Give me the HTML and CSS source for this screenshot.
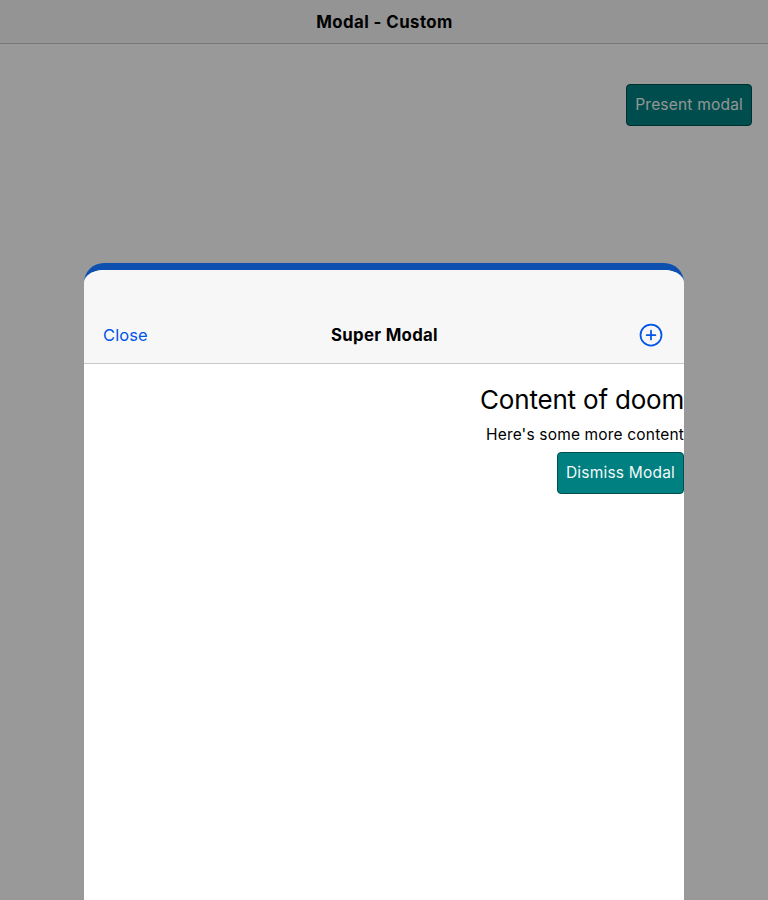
FILE: index.html
```html
<!DOCTYPE html>
<html lang="en">
<head>
<meta charset="utf-8">
<title>Modal - Custom</title>
<link rel="stylesheet" href="styles.css">
</head>
<body>
<div class="page">
  <header class="page-header"><h1 class="title">Modal - Custom</h1></header>
  <main class="page-content"><button class="action">Present modal</button></main>
</div>
<div class="backdrop"></div>
<section class="modal">
  <header class="modal-header">
    <button class="close">Close</button>
    <h2 class="title modal-title">Super Modal</h2>
    <svg class="add" viewBox="0 0 512 512" fill="none" stroke="currentColor" stroke-width="32"><path d="M448 256c0-106-86-192-192-192S64 150 64 256s86 192 192 192 192-86 192-192z" stroke-miterlimit="10"/><path stroke-linecap="round" stroke-linejoin="round" d="M256 176v160M336 256H176"/></svg>
  </header>
  <div class="modal-content">
    <h1 class="heading">Content of doom</h1>
    <p class="text">Here's some more content</p>
    <button class="action">Dismiss Modal</button>
  </div>
</section>
</body>
</html>
```
FILE: styles.css
```css
* { box-sizing: border-box; }
body {
  margin: 0;
  height: 900px;
  overflow: hidden;
  position: relative;
  font-family: Inter, sans-serif;
  font-size: 15.5px;
  color: #000;
  background: #fff;
}
button { font: inherit; margin: 0; }
.page { height: 900px; }
.page-header {
  height: 44px;
  display: flex;
  align-items: center;
  justify-content: center;
  background: #f7f7f7;
  border-bottom: 1px solid #c8c7cc;
}
.title {
  margin: 0;
  padding-left: 1px;
  font-size: 16.8px;
  font-weight: 700;
  line-height: 20px;
  letter-spacing: 0.45px;
}
.modal-title { letter-spacing: 0.3px; }
.page-content { display: flex; justify-content: flex-end; padding: 40px 16px; }
.action {
  height: 42px;
  padding: 0 8px 1px;
  letter-spacing: 0.2px;
  color: #f2f8f8;
  background: #008080;
  border: 1px solid #005050;
  border-radius: 4px;
}
.backdrop { position: absolute; inset: 0; background: rgba(0, 0, 0, 0.4); }
.modal {
  position: absolute;
  top: 263px;
  left: 84px;
  width: 600px;
  height: 637px;
  overflow: hidden;
  background: #fff;
  border-top: 7px solid #0d50b0;
  border-radius: 20px 20px 0 0;
}
.modal-header {
  height: 94px;
  padding: 37px 19px 0;
  display: grid;
  grid-template-columns: 1fr auto 1fr;
  align-items: center;
  background: #f7f7f7;
  border-bottom: 1px solid #c8c7cc;
}
.close {
  justify-self: start;
  padding: 0;
  border: 0;
  background: none;
  font-size: 16.5px;
  letter-spacing: 0.1px;
  color: #0054e9;
}
.add { justify-self: end; width: 28px; height: 28px; color: #0054e9; }
.modal-content {
  display: flex;
  flex-direction: column;
  align-items: flex-end;
  padding-top: 20px;
}
.heading {
  margin: 0;
  font-size: 26px;
  font-weight: 400;
  line-height: 32px;
  letter-spacing: -0.2px;
}
.text { margin: 9px 0 8px; line-height: 19px; letter-spacing: 0.17px; }
```
